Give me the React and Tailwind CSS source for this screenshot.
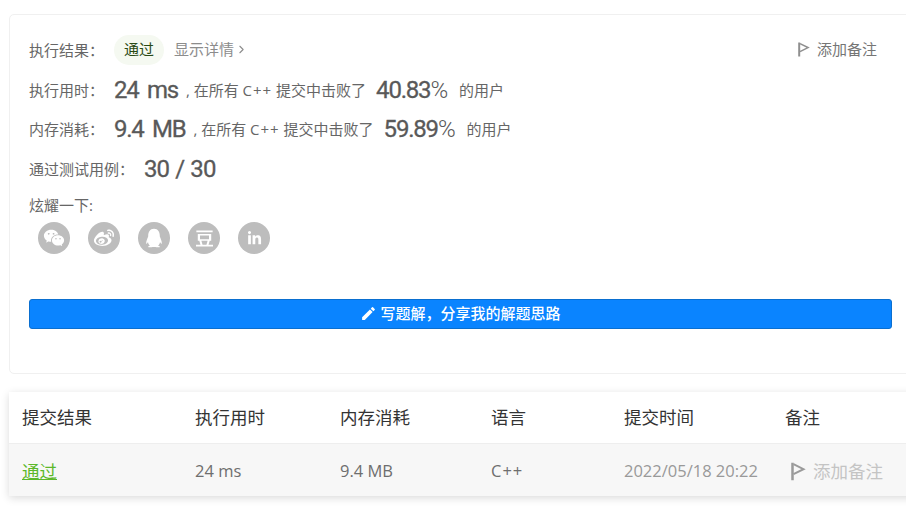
import { ChevronRight } from "lucide-react";
import { FaLinkedinIn } from "react-icons/fa";
import { MdEdit } from "react-icons/md";
import { RiQqFill, RiWechatFill, RiWeiboFill } from "react-icons/ri";
import { SiDouban } from "react-icons/si";

const shareIcons = [
  { name: "wechat", Icon: RiWechatFill, size: 22 },
  { name: "weibo", Icon: RiWeiboFill, size: 22 },
  { name: "qq", Icon: RiQqFill, size: 22 },
  { name: "douban", Icon: SiDouban, size: 17 },
  { name: "linkedin", Icon: FaLinkedinIn, size: 15 },
];

function Flag({ className }) {
  return (
    <svg viewBox="0 0 12 15" className={className} fill="none" stroke="currentColor">
      <path d="M1.2 0.5V14.5" strokeWidth="2" />
      <path d="M2 1.6L10 5.6L2 9.6" strokeWidth="1.6" />
    </svg>
  );
}

function Label({ children }) {
  return <span className="text-[15px] leading-[20px] text-[#666666]">{children}</span>;
}

function Stat({ children, className = "" }) {
  return (
    <span className={`font-['Roboto',sans-serif] text-[24px] leading-[30px] text-[#595959] [-webkit-text-stroke:0.3px_#595959] ${className}`}>
      {children}
    </span>
  );
}

function ResultRow({ label, value, percent, className }) {
  return (
    <div className={`flex h-[30px] items-center ${className}`}>
      <Label>{label}</Label>
      <Stat className="ml-[10px] tracking-[-1.3px] [word-spacing:4px]">{value}</Stat>
      <span className="ml-[8px] text-[15px] text-[#666666]">
        , 在所有 <span className="tracking-[1px]">C++</span> 提交中击败了
      </span>
      <Stat className="ml-[10px] tracking-[-1.2px]">
        {percent}
        <span className="font-light [-webkit-text-stroke:0]">%</span>
      </Stat>
      <span className="ml-[12px] text-[15px] text-[#666666]">的用户</span>
    </div>
  );
}

export default function App() {
  return (
    <main className="h-[529px] w-[906px] overflow-hidden bg-white pl-[9px] pt-[14px] font-['Open_Sans','Noto_Sans_CJK_SC',sans-serif]">
      <section className="h-[360px] w-[920px] rounded-[5px] border border-[#f0f0f0] px-[19px] pt-[19px]">
        <div className="flex h-[31px] w-[848px] items-center">
          <Label>执行结果：</Label>
          <span className="ml-[10px] flex h-[30px] w-[50px] items-center justify-center rounded-full bg-[#f5f9f1] text-[15px] text-[#2a4a14]">
            通过
          </span>
          <span className="ml-[10px] text-[15px] text-[#8c8c8c]">显示详情</span>
          <ChevronRight className="ml-[1px] h-[13px] w-[13px] text-[#8c8c8c]" />
          <span className="ml-auto flex items-center text-[15px] text-[#757575]">
            <Flag className="mr-[7px] h-[15px] w-[12px] text-[#8f8f8f]" />
            添加备注
          </span>
        </div>

        <ResultRow className="mt-[10px]" label="执行用时：" value="24 ms" percent="40.83" />
        <ResultRow className="mt-[9px]" label="内存消耗：" value="9.4 MB" percent="59.89" />
        <div className="mt-[10px] flex h-[30px] items-center">
          <Label>通过测试用例：</Label>
          <Stat className="ml-[10px] tracking-[-0.9px] [word-spacing:1px]">30 / 30</Stat>
        </div>

        <div className="mt-[11px] text-[15px] leading-[20px] text-[#666666]">炫耀一下:</div>
        <div className="mt-[7px] flex gap-[18px] pl-[9px]">
          {shareIcons.map(({ name, Icon, size }) => (
            <span key={name} className="flex h-[32px] w-[32px] items-center justify-center rounded-full bg-[#bdbdbd] text-white">
              <Icon size={size} />
            </span>
          ))}
        </div>

        <button
          type="button"
          className="mt-[45px] flex h-[30px] w-[863px] items-center justify-center rounded-[3px] border border-[#0a6fd0] bg-[#0a84ff] pb-[2px] text-[15px] font-medium text-white"
        >
          <MdEdit size={17} className="mr-[3px]" />
          写题解，分享我的解题思路
        </button>
      </section>

      <section className="mt-[18px] h-[104px] w-[920px] rounded-t-[3px] shadow-[0_2px_8px_rgba(0,0,0,0.15)]">
        <div className="flex h-[52px] items-center border-b border-[#eeeeee] bg-white text-[17.5px] text-[#333333]">
          <span className="w-[173px] pl-[13px]">提交结果</span>
          <span className="w-[145px] pl-[13px]">执行用时</span>
          <span className="w-[151px] pl-[13px]">内存消耗</span>
          <span className="w-[133px] pl-[13px]">语言</span>
          <span className="w-[161px] pl-[13px]">提交时间</span>
          <span className="pl-[13px]">备注</span>
        </div>
        <div className="flex h-[52px] items-center bg-[#f7f7f7] pt-[2px] text-[16.5px] text-[#6e6e6e]">
          <span className="w-[173px] pl-[13px] text-[17.5px] text-[#5cb82a] underline underline-offset-1">通过</span>
          <span className="w-[145px] pl-[13px]">24 ms</span>
          <span className="w-[151px] pl-[13px]">9.4 MB</span>
          <span className="w-[133px] pl-[13px] tracking-[1px]">C++</span>
          <span className="w-[161px] pl-[13px] whitespace-nowrap text-[#999999]">2022/05/18 20:22</span>
          <span className="flex items-center pl-[19px] text-[17.5px] text-[#c4c4c4]">
            <Flag className="mr-[7px] h-[19px] w-[15px] text-[#9a9a9a]" />
            添加备注
          </span>
        </div>
      </section>
    </main>
  );
}
